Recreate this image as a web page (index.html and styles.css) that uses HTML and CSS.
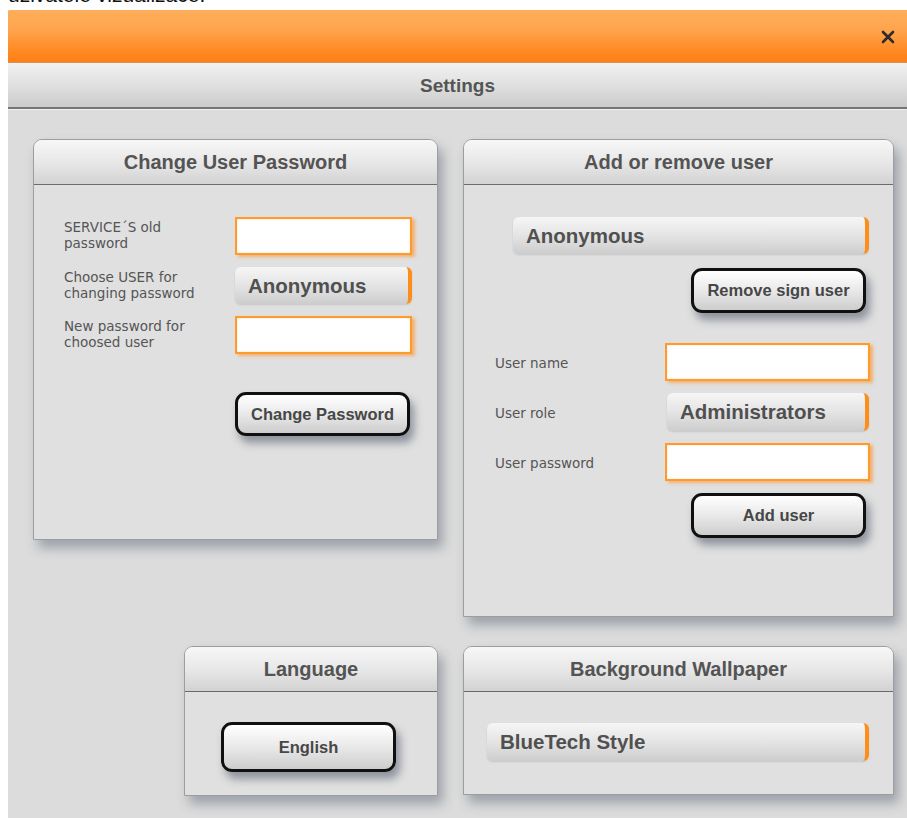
FILE: index.html
```html
<!DOCTYPE html>
<html lang="en">
<head>
<meta charset="utf-8">
<title>Settings</title>
<link rel="stylesheet" href="styles.css">
</head>
<body>
<p class="lead">uživatelé vizualizace.</p>
<div class="app">
  <div class="titlebar">
    <button class="close" aria-label="Close">
      <svg width="14" height="14" viewBox="0 0 14 14"><path d="M2 2L12 12M12 2L2 12" stroke="#2b2b2b" stroke-width="2.6" stroke-linecap="round"/></svg>
    </button>
  </div>
  <div class="pagebar">Settings</div>
  <main class="content">
    <section class="card card-password">
      <header class="card-head">Change User Password</header>
      <div class="card-body form-grid pw-grid">
        <label class="lbl">SERVICE´S old<br>password</label>
        <div class="field"><input class="input" type="password"></div>
        <label class="lbl">Choose USER for<br>changing password</label>
        <div class="field"><div class="select">Anonymous</div></div>
        <label class="lbl">New password for<br>choosed user</label>
        <div class="field"><input class="input" type="password"></div>
        <div class="field btn-row pw-btn"><button class="btn">Change Password</button></div>
      </div>
    </section>

    <section class="card card-users">
      <header class="card-head">Add or remove user</header>
      <div class="card-body users-body">
        <div class="select select-wide">Anonymous</div>
        <div class="btn-line"><button class="btn">Remove sign user</button></div>
        <div class="form-grid user-grid">
          <label class="lbl one">User name</label>
          <div class="field"><input class="input" type="text"></div>
          <label class="lbl one">User role</label>
          <div class="field"><div class="select">Administrators</div></div>
          <label class="lbl one">User password</label>
          <div class="field"><input class="input" type="password"></div>
        </div>
        <div class="btn-line add-line"><button class="btn">Add user</button></div>
      </div>
    </section>

    <section class="card card-lang">
      <header class="card-head">Language</header>
      <div class="card-body lang-body"><button class="btn">English</button></div>
    </section>

    <section class="card card-wall">
      <header class="card-head">Background Wallpaper</header>
      <div class="card-body wall-body"><div class="select">BlueTech Style</div></div>
    </section>
  </main>
</div>
</body>
</html>
```

FILE: styles.css
```css
html, body {
  margin: 0;
  padding: 0;
  background: #ffffff;
  overflow: hidden;
}

body {
  padding-left: 8px;
  font-family: "Liberation Sans", Arial, sans-serif;
}

.lead {
  margin: -17px 0 0 0;
  height: 27px;
  font-size: 21px;
  line-height: 24px;
  color: #111;
}

.app {
  background: #dcdcdc;
  min-height: 820px;
}

/* orange window bar */
.titlebar {
  height: 52px;
  background: linear-gradient(#ffae5a 0%, #ffa34c 40%, #ff8c25 75%, #ff7f15 100%);
  border-bottom: 1px solid #d7915a;
  display: flex;
  align-items: center;
  justify-content: flex-end;
  padding-right: 12px;
  border-top-left-radius: 2px;
}

.close {
  border: 0;
  background: none;
  padding: 0;
  width: 14px;
  height: 14px;
  margin-top: 2px;
}

.close svg { display: block; }

/* page heading */
.pagebar {
  height: 44px;
  line-height: 46px;
  text-align: center;
  font-weight: bold;
  font-size: 19px;
  color: #555;
  background: linear-gradient(#f1f1f1, #e0e0e0 50%, #cbcbcb);
  border-bottom: 2px solid #757575;
  box-shadow: 0 1px 0 #eeeeee;
}

.content {
  display: grid;
  grid-template-columns: 405px 431px;
  column-gap: 25px;
  row-gap: 29px;
  padding: 30px 0 0 25px;
  align-items: start;
}

/* cards */
.card {
  background: #e0e0e0;
  border: 1px solid #9d9d9d;
  border-radius: 9px 9px 0 0;
  box-shadow: 5px 8px 12px rgba(70, 80, 100, 0.42);
}

.card-head {
  height: 44px;
  line-height: 44px;
  text-align: center;
  font-weight: bold;
  font-size: 20px;
  color: #545454;
  background: linear-gradient(#f7f7f7, #e6e6e6 55%, #d2d2d2);
  border-bottom: 1px solid #6b6b6b;
  border-radius: 8px 8px 0 0;
}

.card-password { height: 399px; }
.card-users { height: 476px; }
.card-lang {
  width: 252px;
  justify-self: end;
  height: 148px;
}
.card-wall { height: 147px; }

/* form rows */
.form-grid {
  display: grid;
  align-items: center;
}

.pw-grid {
  grid-template-columns: 171px 178px;
  row-gap: 12px;
  padding: 32px 0 0 30px;
}

.lbl {
  font-family: "DejaVu Sans", Verdana, sans-serif;
  font-size: 13.5px;
  line-height: 16px;
  color: #555;
}

.pw-grid .lbl { align-self: start; margin-top: 2px; }

.field { display: flex; }

.input {
  box-sizing: border-box;
  width: 177px;
  height: 38px;
  margin: 0;
  background: #ffffff;
  border: 2px solid #ff9a2c;
  box-shadow: inset 0 0 2px #ffd9a8, 3px 2px 3px rgba(255, 140, 30, 0.55);
  outline: none;
}

.select {
  box-sizing: border-box;
  height: 37px;
  width: 177px;
  padding-left: 13px;
  line-height: 37px;
  font-weight: bold;
  font-size: 20.5px;
  color: #505050;
  background: linear-gradient(#f6f6f6, #e4e4e4 50%, #cdcdcd);
  border-right: 4px solid #ff8d1a;
  border-radius: 6px;
  box-shadow: 0 1px 2px rgba(0, 0, 0, 0.12);
}

.btn {
  box-sizing: border-box;
  width: 175px;
  height: 44px;
  border: 3px solid #101010;
  border-radius: 11px;
  background: linear-gradient(#ffffff, #e9e9e9 50%, #cdcdcd);
  box-shadow: 4px 7px 9px rgba(60, 70, 90, 0.5);
  font-family: "Liberation Sans", Arial, sans-serif;
  font-weight: bold;
  font-size: 16.5px;
  color: #474747;
  padding: 0;
}

.pw-btn {
  grid-column: 2;
  margin-top: 26px;
}

/* add / remove users */
.users-body {
  padding: 32px 24px 0 31px;
}

.select-wide {
  width: 356px;
  margin-left: 18px;
}

.btn-line {
  display: flex;
  justify-content: flex-end;
  padding-right: 3px;
  margin-top: 14px;
}

.btn-line .btn { height: 45px; }

.user-grid {
  grid-template-columns: 170px 205px;
  margin-top: 30px;
  row-gap: 12px;
}

.user-grid .input { width: 205px; }
.user-grid .select { width: 202px; margin-left: 2px; height: 38px; }
.user-grid .lbl { margin-top: 2px; }

.add-line { margin-top: 12px; }

/* language */
.lang-body {
  padding: 30px 0 0 36px;
}

.lang-body .btn { height: 50px; }

/* wallpaper */
.wall-body {
  padding: 31px 0 0 23px;
}

.wall-body .select {
  width: 382px;
  height: 38px;
}
```
